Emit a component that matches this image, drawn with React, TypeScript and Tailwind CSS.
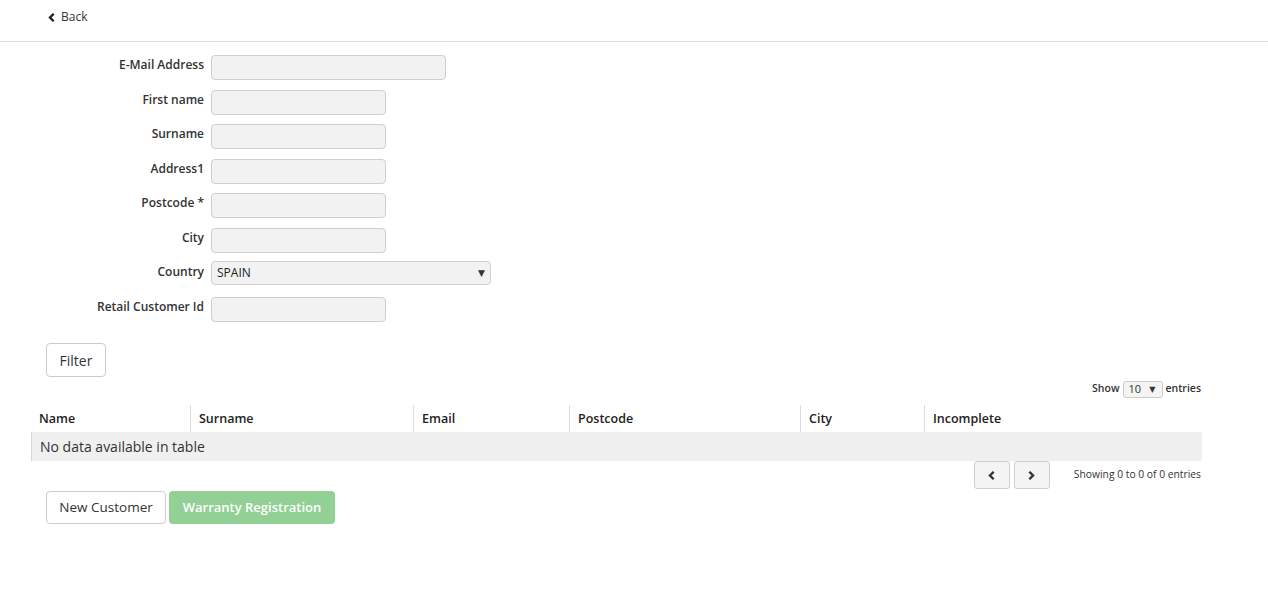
import React from 'react';

const fieldRows = [
  { label: 'E-Mail Address', width: 'w-[235px]' },
  { label: 'First name', width: 'w-[175px]' },
  { label: 'Surname', width: 'w-[175px]' },
  { label: 'Address1', width: 'w-[175px]' },
  { label: 'Postcode *', width: 'w-[175px]' },
  { label: 'City', width: 'w-[175px]' },
];

const columns = [
  { name: 'Name', w: 'w-[159px]' },
  { name: 'Surname', w: 'w-[223px]' },
  { name: 'Email', w: 'w-[156px]' },
  { name: 'Postcode', w: 'w-[231px]' },
  { name: 'City', w: 'w-[124px]' },
  { name: 'Incomplete', w: 'w-[278px]' },
];

const Chevron: React.FC<{ dir: 'left' | 'right'; className?: string }> = ({ dir, className }) => (
  <svg viewBox="0 0 10 10" className={className} fill="none" stroke="currentColor" strokeWidth="2.6" strokeLinecap="square">
    {dir === 'left' ? <path d="M6.5 1.8L3.3 5l3.2 3.2" /> : <path d="M3.5 1.8L6.7 5 3.5 8.2" />}
  </svg>
);

const Field: React.FC<{ label: string; children: React.ReactNode }> = ({ label, children }) => (
  <div className="flex items-start h-[34.5px]">
    <label className="w-[204px] text-right text-[12px] font-semibold text-[#333] leading-[18px] pt-[1px]">{label}</label>
    <div className="ml-[7px]">{children}</div>
  </div>
);

export default function App() {
  return (
    <div className="min-h-[608px] bg-white text-[#333]" style={{ fontFamily: '"Open Sans", "DejaVu Sans", sans-serif' }}>
      {/* Top bar */}
      <div className="h-[42px] border-b border-[#dcdcdc] flex items-center pl-[47px]">
        <a className="flex items-center gap-[5px] text-[12px] text-[#333] -mt-[7px]">
          <Chevron dir="left" className="w-[9px] h-[9px] text-[#222]" />
          Back
        </a>
      </div>

      {/* Filter form */}
      <div className="pt-[13px]">
        {fieldRows.map((f) => (
          <Field key={f.label} label={f.label}>
            <input className={`${f.width} h-[25px] rounded-[4px] border border-[#cfcfcf] bg-[#f2f2f2] outline-none`} />
          </Field>
        ))}
        <Field label="Country">
          <div className="w-[280px] h-[24px] -mt-[1px] rounded-[4px] border border-[#cfcfcf] bg-[#f2f2f2] flex items-center justify-between pl-[5px] pr-[5px] text-[12px] text-[#222]">
            <span>SPAIN</span>
            <span className="text-[9px] text-[#333]">▼</span>
          </div>
        </Field>
        <Field label="Retail Customer Id">
          <input className="w-[175px] h-[25px] rounded-[4px] border border-[#cfcfcf] bg-[#f2f2f2] outline-none" />
        </Field>
      </div>

      <div className="pl-[46px] mt-[12px]">
        <button className="w-[60px] h-[34px] rounded-[4px] border border-[#ccc] bg-white text-[14px] text-[#333]">Filter</button>
      </div>

      {/* Table area */}
      <div className="ml-[31px] w-[1171px]">
        <div className="flex justify-end items-center gap-[3px] text-[10.5px] font-semibold text-[#333] h-[18px] mt-[3px] pr-[1px]">
          <span>Show</span>
          <div className="w-[40px] h-[17px] rounded-[3px] border border-[#ccc] bg-[#f4f4f4] flex items-center justify-between pl-[5px] pr-[6px] text-[11px] font-normal">
            <span>10</span>
            <span className="text-[8px]">▼</span>
          </div>
          <span>entries</span>
        </div>

        <div className="flex h-[27px] mt-[7px]">
          {columns.map((c, i) => (
            <div
              key={c.name}
              className={`${c.w} flex items-center pt-[1px] text-[12.5px] font-semibold text-[#222] ${i === 0 ? 'pl-[8px]' : 'pl-[8px] border-l border-[#ddd]'}`}
            >
              {c.name}
            </div>
          ))}
        </div>
        <div className="h-[29px] bg-[#f0f0f0] border-l border-[#d6d6d6] flex items-center pl-[8px] text-[14px] text-[#333]">
          No data available in table
        </div>

        <div className="flex justify-end items-start h-[30px]">
          <button className="w-[36px] h-[28px] rounded-[3px] border border-[#d0d0d0] bg-[#f4f4f4] flex items-center justify-center">
            <Chevron dir="left" className="w-[9px] h-[9px] text-[#333]" />
          </button>
          <button className="w-[36px] h-[28px] ml-[4px] rounded-[3px] border border-[#d0d0d0] bg-[#f4f4f4] flex items-center justify-center">
            <Chevron dir="right" className="w-[9px] h-[9px] text-[#333]" />
          </button>
          <span className="ml-[24px] mt-[6px] text-[10.3px] text-[#333] pr-[1px]">Showing 0 to 0 of 0 entries</span>
        </div>
      </div>

      <div className="pl-[46px] flex gap-[3px]">
        <button className="w-[120px] h-[33px] rounded-[4px] border border-[#ccc] bg-white text-[13.5px] text-[#333]">New Customer</button>
        <button className="w-[166px] h-[33px] rounded-[4px] bg-[#93d095] text-[13px] font-semibold text-white">Warranty Registration</button>
      </div>
    </div>
  );
}
